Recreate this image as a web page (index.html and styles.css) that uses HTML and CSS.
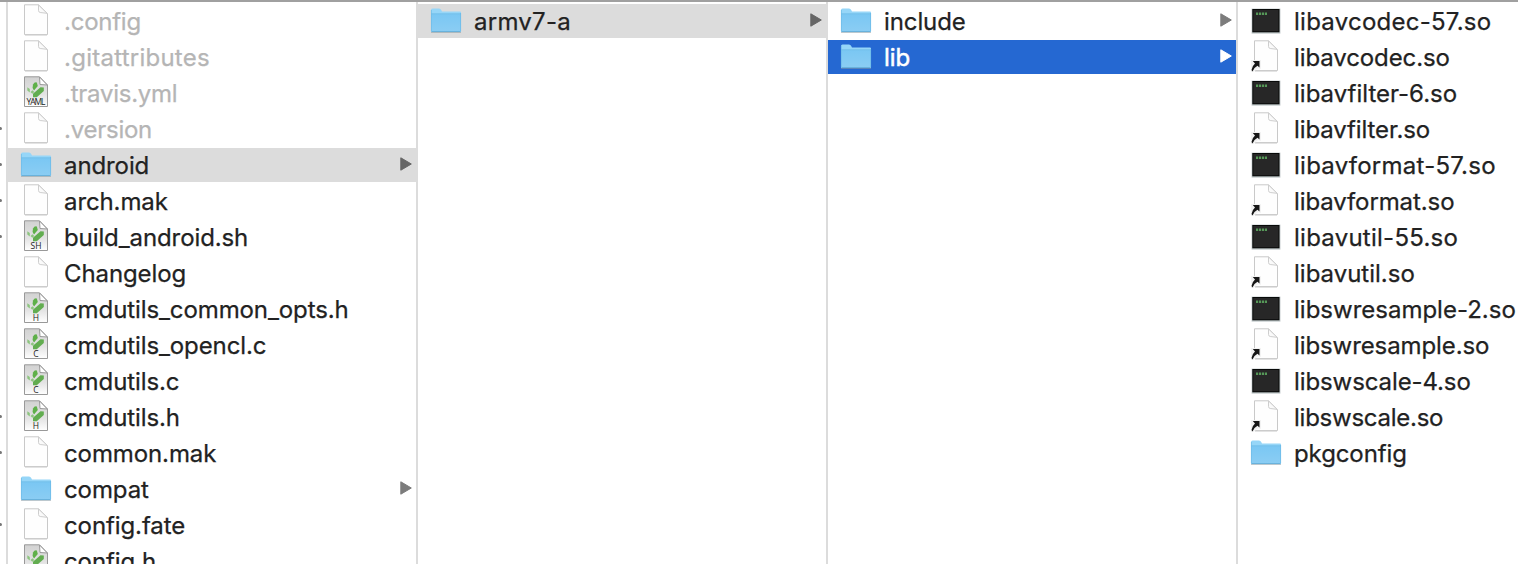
FILE: index.html
```
<!DOCTYPE html>
<html lang="en">
<head>
<meta charset="utf-8">
<title>Finder</title>
<link rel="stylesheet" href="styles.css">
</head>
<body>
<svg class="defs" width="0" height="0">
  <defs>
    <linearGradient id="fold" x1="0" y1="0" x2="0" y2="1"><stop offset="0" stop-color="#7ac7f3"/><stop offset="1" stop-color="#8bcdf3"/></linearGradient>
    <linearGradient id="grey" x1="0" y1="0" x2="0" y2="1"><stop offset="0" stop-color="#d2d2d2"/><stop offset=".6" stop-color="#e4e4e4"/><stop offset="1" stop-color="#fff"/></linearGradient>
    <symbol id="doc" viewBox="0 0 32 34">
      <path d="M4.500 .8H18.500L27.500 9.500V30.500H4.500Z" fill="#fefefe" stroke="#c9c9c9"/>
      <path d="M5 31.300H27" stroke="#ddd"/>
      <path d="M18.500 1V6.500Q18.500 8.200 20.200 8.500L27 9.300Z" fill="#fafafa" stroke="#cecece"/>
    </symbol>
    <symbol id="code" viewBox="0 0 32 34">
      <path d="M4.500 .8H19.500L27.500 9V30.500H4.500Z" fill="url(#grey)" stroke="#999"/>
      <path d="M7.300 11.300L9.800 13V16.500L7.300 14.500Z" fill="#8cc47e"/>
      <path d="M13 8.500Q14.500 5.800 16.800 6.500L17.800 10 14 14.500 12.600 12Z" fill="#5fb04a"/>
      <path d="M10.500 16L12.500 14.200 14.300 16 12.300 17.800Z" fill="#8cc47e"/>
      <path d="M13 17.800L20.500 11.200 23.800 11.500V15L16.800 21.200H13Z" fill="#62ad50"/>
      <path d="M19.500 1L20 8.500 27.300 9Z" fill="#fff" stroke="#999"/>
    </symbol>
    <symbol id="folder" viewBox="0 0 32 34">
      <path d="M1 28.500H31" stroke="#8e989d" stroke-opacity=".5"/>
      <path d="M1 6Q1 4.500 2.500 4.500H9Q10.500 4.500 11.200 6L12 7.500H30Q31 7.500 31 8.500V27Q31 28 30 28H2Q1 28 1 27Z" fill="#96d6f8"/>
      <path d="M1 10H31V27Q31 28 30 28H2Q1 28 1 27Z" fill="url(#fold)"/>
      <path d="M1 9.700H31M1.400 6V27M30.600 9V27" stroke="#6bbae7" stroke-width=".7"/>
      <path d="M1.500 27.600H30.500" stroke="#62acd6" stroke-width=".9"/>
    </symbol>
    <symbol id="exec" viewBox="0 0 32 34">
      <rect x="1.600" y="4.600" width="28.800" height="25" fill="#bcc4c6"/>
      <rect x="2.300" y="5" width="27.200" height="23.300" fill="#080a09"/>
      <rect x="3.300" y="6" width="25.200" height="21.300" fill="#272727"/>
      <path d="M6 9.700H17" stroke="#63b565" stroke-width="2.500" stroke-dasharray="2.200 .8" stroke-opacity=".8"/>
    </symbol>
    <symbol id="alias" viewBox="0 0 32 34">
      <use href="#doc" width="32" height="34"/>
      <path d="M1 20H11V29L8 28 3.500 32H1Z" fill="#f2f2f2"/>
      <path d="M2.800 21H9.500V27.500L7.500 25.800Q4 27.500 2.500 31.500L1.500 30Q2 26 5 23.500Z" fill="#161616"/>
    </symbol>
    <symbol id="tri" viewBox="0 0 12 14"><path d="M.8 .8L11.300 7 .8 13.200Z" fill="currentColor" stroke="currentColor" stroke-linejoin="round"/></symbol>
  </defs>
</svg>
<main class="browser">
  <div class="edge">
    <i></i><i></i><i></i><i class="tip"></i><i class="tip"></i><i class="tip"></i><i class="tip"></i><i></i><i></i><i></i><i></i><i class="tip"></i><i class="tip"></i><i></i><i class="tip"></i><i></i>
  </div>
  <section class="column">
    <div class="row hidden-file"><svg class="icon"><use href="#doc"/></svg><span class="name tight">.config</span></div>
    <div class="row hidden-file"><svg class="icon"><use href="#doc"/></svg><span class="name wide">.gitattributes</span></div>
    <div class="row hidden-file"><svg class="icon"><use href="#code"/><text class="tag" x="16" y="28.500" textLength="19">YAML</text></svg><span class="name tight">.travis.yml</span></div>
    <div class="row hidden-file"><svg class="icon"><use href="#doc"/></svg><span class="name tight">.version</span></div>
    <div class="row open"><svg class="icon"><use href="#folder"/></svg><span class="name">android</span><svg class="arrow"><use href="#tri"/></svg></div>
    <div class="row"><svg class="icon"><use href="#doc"/></svg><span class="name">arch.mak</span></div>
    <div class="row"><svg class="icon"><use href="#code"/><text class="tag" x="16" y="28.500">SH</text></svg><span class="name">build_android.sh</span></div>
    <div class="row"><svg class="icon"><use href="#doc"/></svg><span class="name">Changelog</span></div>
    <div class="row"><svg class="icon"><use href="#code"/><text class="tag" x="16" y="28.500">H</text></svg><span class="name">cmdutils_common_opts.h</span></div>
    <div class="row"><svg class="icon"><use href="#code"/><text class="tag" x="16" y="28.500">C</text></svg><span class="name">cmdutils_opencl.c</span></div>
    <div class="row"><svg class="icon"><use href="#code"/><text class="tag" x="16" y="28.500">C</text></svg><span class="name">cmdutils.c</span></div>
    <div class="row"><svg class="icon"><use href="#code"/><text class="tag" x="16" y="28.500">H</text></svg><span class="name">cmdutils.h</span></div>
    <div class="row"><svg class="icon"><use href="#doc"/></svg><span class="name">common.mak</span></div>
    <div class="row"><svg class="icon"><use href="#folder"/></svg><span class="name">compat</span><svg class="arrow"><use href="#tri"/></svg></div>
    <div class="row"><svg class="icon"><use href="#doc"/></svg><span class="name">config.fate</span></div>
    <div class="row"><svg class="icon"><use href="#code"/></svg><span class="name">config.h</span></div>
  </section>
  <section class="column">
    <div class="row open"><svg class="icon"><use href="#folder"/></svg><span class="name wide">armv7-a</span><svg class="arrow"><use href="#tri"/></svg></div>
  </section>
  <section class="column">
    <div class="row"><svg class="icon"><use href="#folder"/></svg><span class="name">include</span><svg class="arrow"><use href="#tri"/></svg></div>
    <div class="row selected"><svg class="icon"><use href="#folder"/></svg><span class="name">lib</span><svg class="arrow"><use href="#tri"/></svg></div>
  </section>
  <section class="column last">
    <div class="row"><svg class="icon"><use href="#exec"/></svg><span class="name wide">libavcodec-57.so</span></div>
    <div class="row"><svg class="icon"><use href="#alias"/></svg><span class="name">libavcodec.so</span></div>
    <div class="row"><svg class="icon"><use href="#exec"/></svg><span class="name even">libavfilter-6.so</span></div>
    <div class="row"><svg class="icon"><use href="#alias"/></svg><span class="name">libavfilter.so</span></div>
    <div class="row"><svg class="icon"><use href="#exec"/></svg><span class="name wide">libavformat-57.so</span></div>
    <div class="row"><svg class="icon"><use href="#alias"/></svg><span class="name">libavformat.so</span></div>
    <div class="row"><svg class="icon"><use href="#exec"/></svg><span class="name wide">libavutil-55.so</span></div>
    <div class="row"><svg class="icon"><use href="#alias"/></svg><span class="name even">libavutil.so</span></div>
    <div class="row"><svg class="icon"><use href="#exec"/></svg><span class="name even">libswresample-2.so</span></div>
    <div class="row"><svg class="icon"><use href="#alias"/></svg><span class="name">libswresample.so</span></div>
    <div class="row"><svg class="icon"><use href="#exec"/></svg><span class="name">libswscale-4.so</span></div>
    <div class="row"><svg class="icon"><use href="#alias"/></svg><span class="name tight">libswscale.so</span></div>
    <div class="row"><svg class="icon"><use href="#folder"/></svg><span class="name">pkgconfig</span></div>
  </section>
</main>
</body>
</html>
```
FILE: styles.css
```
* { box-sizing: border-box; }
body {
  margin: 0;
  height: 564px;
  overflow: hidden;
  background: #fff;
  color: #222;
  font-family: Inter, "Liberation Sans", sans-serif;
}
.defs { position: absolute; }
.browser {
  display: flex;
  height: 564px;
  overflow: hidden;
  border-top: 2px solid #a0a0a0;
}
.edge, .column {
  display: flex;
  flex-direction: column;
  flex: none;
  gap: 2px;
  padding-top: 2px;
  border-right: 2px solid #dcdcdc;
}
.edge { width: 8px; }
.column { width: 410px; }
.column.last { width: 280px; border-right: 0; }
.edge i { height: 34px; flex: none; display: flex; align-items: center; }
.edge .tip::before {
  content: "";
  width: 2px;
  height: 3px;
  margin-bottom: 2px;
  border-radius: 0 2px 2px 0;
  background: #777;
}
.row {
  display: flex;
  flex: none;
  align-items: center;
  height: 34px;
  padding: 0 4px 0 12px;
}
.icon { width: 32px; height: 34px; flex: none; margin-right: 12px; }
.name {
  flex: 1;
  padding-top: 2px;
  font-size: 24px;
  line-height: 34px;
  letter-spacing: -.1px;
  white-space: nowrap;
  -webkit-text-stroke: .25px currentColor;
}
.name.even { letter-spacing: 0; }
.name.wide { letter-spacing: .25px; }
.name.tight { letter-spacing: -.25px; }
.tag { font: 8.500px "Open Sans", sans-serif; text-anchor: middle; fill: #222; }
.arrow { width: 12px; height: 14px; flex: none; margin-bottom: 2px; color: #7c7c7c; }
.hidden-file .name { color: #b5b5b5; }
.open { background: #dcdcdc; }
.open .arrow { color: #666; }
.selected { background: #2568d2; color: #fff; }
.selected .name { -webkit-text-stroke-width: .5px; }
.selected .arrow { color: #fff; }
```
